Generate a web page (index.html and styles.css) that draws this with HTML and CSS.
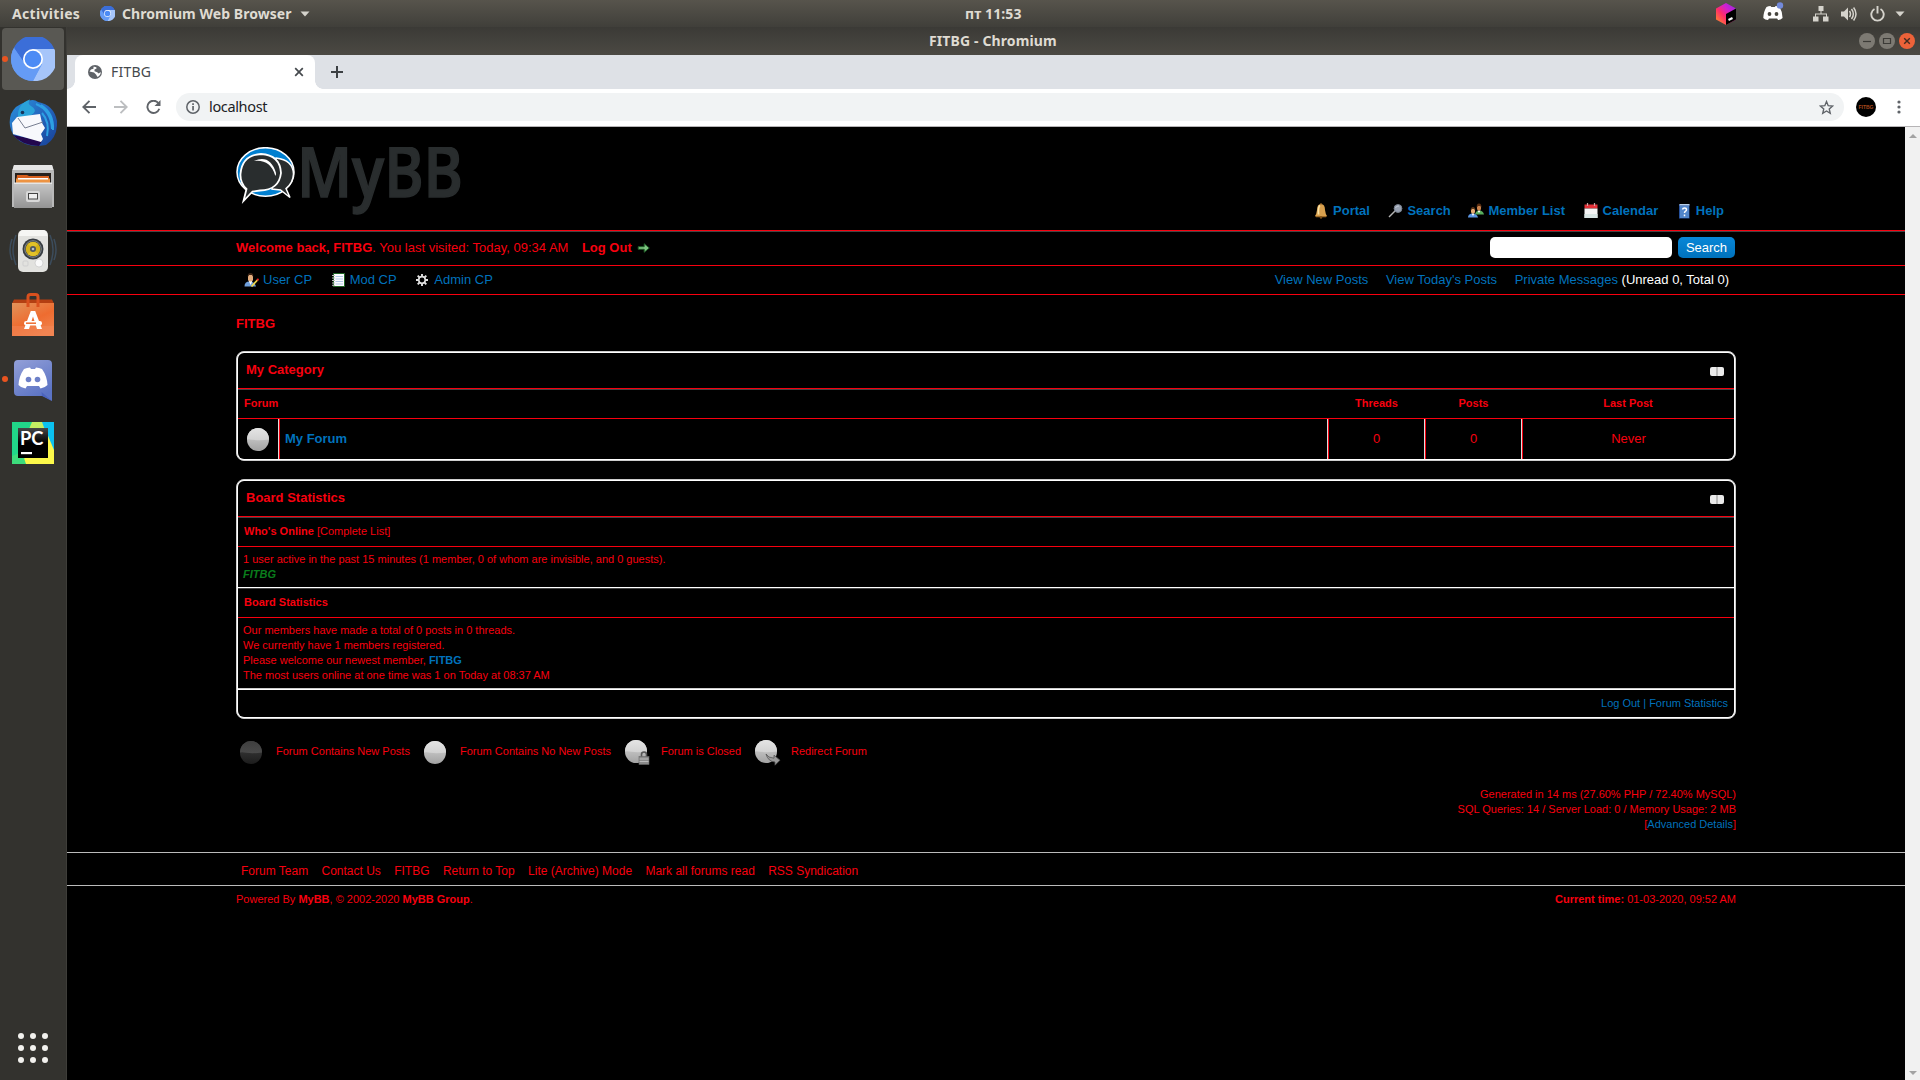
FILE: index.html
```html
<!DOCTYPE html>
<html lang="en">
<head>
<meta charset="utf-8">
<title>FITBG</title>
<link rel="stylesheet" href="styles.css">
</head>
<body>
<svg class="defs" width="0" height="0">
  <defs>
    <linearGradient id="orbTop" x1="0" y1="0" x2="0" y2="1"><stop offset="0" stop-color="#e4e4e4"/><stop offset="1" stop-color="#d2d2d2"/></linearGradient>
    <linearGradient id="orbLow" x1="0" y1="0" x2="0" y2="1"><stop offset=".4" stop-color="#c4c4c4"/><stop offset="1" stop-color="#a2a2a2"/></linearGradient>
    <linearGradient id="darkTop" x1="0" y1="0" x2="0" y2="1"><stop offset="0" stop-color="#3e3e3e"/><stop offset="1" stop-color="#4a4a4a"/></linearGradient>
    <linearGradient id="darkLow" x1="0" y1="0" x2="0" y2="1"><stop offset=".4" stop-color="#333"/><stop offset="1" stop-color="#1c1c1c"/></linearGradient>
    <symbol id="orb" viewBox="0 0 24 24"><ellipse cx="11" cy="11.5" rx="11" ry="11.5" fill="url(#orbLow)"/><path d="M0 11.5a11 11.5 0 0 1 22 0Q11 13 0 11Z" fill="url(#orbTop)"/></symbol>
    <symbol id="chromium" viewBox="0 0 44 44">
      <circle cx="22" cy="22" r="22" fill="#669df6"/>
      <path d="M3 11A22 22 0 0 1 43.300 12H22L12 24Z" fill="#3b6ed8"/>
      <path d="M22 12H43.300A22 22 0 0 1 22 44L31 27Z" fill="#a6c5fa"/>
      <path d="M3 11A22 22 0 0 0 22 44L31 27 14 27Z" fill="#659bf5"/>
      <circle cx="22" cy="22" r="10" fill="#fff"/><circle cx="22" cy="22" r="8.300" fill="#4c8bf5"/>
    </symbol>
    <symbol id="discord" viewBox="0 0 30 22"><path d="M6 2Q9 .5 12 .5L13 2h4l1-1.500q3 0 6 1.500 5 7 5.500 16-3 3-7 3.500L21 19H9l-1.500 2.500Q3 21 .5 18 1 9 6 2Z" fill="#fff"/></symbol>
  </defs>
</svg>
<div class="desktop">
  <header class="topbar">
    <span class="activities">Activities</span>
    <svg class="app-ico" width="15" height="15"><use href="#chromium"/></svg>
    <span class="app-name">Chromium Web Browser</span>
    <svg class="caret" width="10" height="6" viewBox="0 0 10 6"><path d="M.5.5h9L5 5.500Z" fill="#d5d3cc"/></svg>
    <span class="clock">пт 11:53</span>
    <div class="tray">
      <svg width="20" height="22" viewBox="0 0 20 22"><defs><linearGradient id="jb" x1="1" y1="0" x2="0" y2="1"><stop offset="0" stop-color="#8a2be2"/><stop offset=".35" stop-color="#d020d0"/><stop offset=".6" stop-color="#ff2c6a"/><stop offset="1" stop-color="#ff9a1f"/></linearGradient></defs><path d="M10 0l10 5.500v11L10 22 0 16.500v-11Z" fill="url(#jb)"/><path d="M10 11l10-5.500v11L10 22Z" fill="#000"/><path d="M12.500 17l4-2" stroke="#fff" stroke-width="2"/></svg>
      <svg class="tray-discord" width="22" height="20" viewBox="0 0 22 20"><path d="M4.500 5q2-1 4-1l.8 1h3.500l.8-1q2 0 4 1 3 5 3 11-2 2-4.500 2l-1-1.500H7L6 18q-3 0-4.700-2Q1.500 9.500 4.500 5Z" fill="#fff"/><circle cx="7.500" cy="12" r="1.900" fill="#47453f"/><circle cx="14.500" cy="12" r="1.900" fill="#47453f"/><circle cx="18" cy="3.500" r="3.200" fill="#7289da"/></svg>
      <svg class="tray-net" width="16" height="16" viewBox="0 0 16 16" fill="#d5d3cc"><path d="M5.500 0h5v5h-5zM0 10.500h5.500V15.500H0zM10 10.500h5.500V15.500H10zM7.500 5h1v3h-1zM2 7.500h12V11h-1V8.500H3V11H2z"/></svg>
      <svg class="tray-vol" width="17" height="16" viewBox="0 0 17 16"><path d="M0 5.500h3l4-4v13l-4-4H0Z" fill="#d5d3cc"/><path d="M8.500 5q2 3 0 6M10.500 3q3.700 5 0 10M12.600 1.500q4.800 6.500 0 13" fill="none" stroke="#d5d3cc" stroke-width="1.500"/></svg>
      <svg class="tray-pow" width="15" height="16" viewBox="0 0 15 16" fill="none" stroke="#d5d3cc" stroke-width="1.900"><path d="M4.500 3A6.200 6.200 0 1 0 10.500 3M7.500 0v7.500"/></svg>
      <svg class="tray-car" width="10" height="6" viewBox="0 0 10 6"><path d="M.5.5h9L5 5.500Z" fill="#d5d3cc"/></svg>
    </div>
  </header>
  <div class="workspace">
    <nav class="dock">
      <div class="tile tile-on"><i class="dot"></i><svg width="44" height="44"><use href="#chromium"/></svg></div>
      <div class="tile"><svg width="48" height="48" viewBox="0 0 48 48"><defs><linearGradient id="tb" x1="0" y1="0" x2="1" y2="1"><stop offset="0" stop-color="#2b92dd"/><stop offset=".5" stop-color="#2465bd"/><stop offset="1" stop-color="#173f95"/></linearGradient></defs><path d="M17 3Q24-1 29 3 45 6 48 22 49 38 37 46L30 47Q14 47 6 38-2 28 2 15 6 6 17 3Z" fill="url(#tb)"/><path d="M9 18Q8 5 21 .5 18 5 22 7 32 13 16 19Z" fill="#2aa3da"/><path d="M27 5q15 6 16 25M32 6q13 8 12 25M33 14q8 9 5 23" fill="none" stroke="#2da0e3" stroke-width="2"/><path d="M4 36q8 10 26 11l3-5Z" fill="#22074e"/><path d="M8 18l23-3 2 9 3 5-4 6 2 5-2 3L4 35 3 24Z" fill="#f7f8fc"/><path d="M9 19l7 10 18-6" fill="none" stroke="#777e91" stroke-width="1"/><circle cx="13.500" cy="13.500" r="1.800" fill="#16345b"/></svg></div>
      <div class="tile"><svg width="42" height="44" viewBox="0 0 42 44"><defs><linearGradient id="fc" x1="0" y1="0" x2="0" y2="1"><stop offset="0" stop-color="#c6c6c6"/><stop offset="1" stop-color="#949494"/></linearGradient></defs><path d="M2 0h38l2 6v36H0V6Z" fill="#b9b9b9"/><path d="M2 0h38l1.500 5H.5Z" fill="#e6e6e6"/><path d="M3 8h36v10H3Z" fill="#27201c"/><path d="M5 10h10l2 1h20v8H4Z" fill="#d8601e"/><path d="M4 13.500h34v5H4Z" fill="#ed9342"/><path d="M6 13h30v1.500H6Z" fill="#fff"/><path d="M2 18h38v25H2Z" fill="url(#fc)"/><path d="M2 17.500h38v1.500H2Z" fill="#e5e5e5"/><rect x="14" y="26" width="14" height="11" rx="2" fill="#d8d8d8"/><rect x="16.500" y="28.500" width="9" height="5.500" fill="#eee" stroke="#444"/></svg></div>
      <div class="tile"><svg width="48" height="44" viewBox="0 0 48 44"><g fill="none" stroke="#3c4c5c" stroke-width="1.500"><path d="M7 6q-6 14 0 30M3 10q-4 11 0 21M41 6q6 14 0 30M45 10q4 11 0 21"/></g><rect x="9" y="1" width="30" height="42" rx="5" fill="#e2e2df"/><path d="M14 1h20q5 0 4 6H10q0-6 4-6Z" fill="#f6f6f4"/><circle cx="24" cy="20" r="10.500" fill="#383d42"/><circle cx="24" cy="20" r="8.300" fill="none" stroke="#80878c"/><circle cx="24" cy="20" r="7.300" fill="#d3b11a"/><path d="M24 20l-5-5a7 7 0 0 1 10 0ZM24 20l5 5a7 7 0 0 1-10 0Z" fill="#eccd33" opacity=".6"/><circle cx="24" cy="20" r="3" fill="#4f565e"/><circle cx="24" cy="20" r="1.300" fill="#b9c0c8"/><circle cx="30" cy="34" r="4" fill="#f9f9f9" stroke="#c7c7c7" stroke-width=".7"/><rect x="14" y="32" width="5" height="5" rx="1" fill="none" stroke="#cfcfcf"/></svg></div>
      <div class="tile"><svg width="42" height="44" viewBox="0 0 42 44"><defs><linearGradient id="sw" x1="0" y1="0" x2=".6" y2="1"><stop offset="0" stop-color="#e2935a"/><stop offset=".6" stop-color="#ee6c30"/><stop offset="1" stop-color="#f0804a"/></linearGradient></defs><path d="M2 6.500h38l2 4H0Z" fill="#b33f12"/><path d="M0 10h42v33H0Z" fill="url(#sw)"/><path d="M0 33h42v10H0Z" fill="#f2875a" opacity=".5"/><path d="M16 14V4q0-2.500 2.500-2.500h5Q26 1.500 26 4v10" fill="none" stroke="#d9501e" stroke-width="3"/><path d="M18.800 18h4.400L30 36h-5l-4-12.500L17 36h-5Z" fill="#fff"/><rect x="12" y="28" width="18" height="4.500" rx="2.200" fill="#fff"/><path d="M14 30.200h10" stroke="#ee6c30" stroke-width="1.500"/></svg></div>
      <div class="tile"><i class="dot"></i><svg class="dock-discord" width="38" height="42" viewBox="0 0 38 42"><defs><linearGradient id="dc" x1="0" y1="0" x2=".5" y2="1"><stop offset="0" stop-color="#93a0d8"/><stop offset="1" stop-color="#5b73c4"/></linearGradient></defs><path d="M4 0h30q4 0 4 4v37l-9-5H4q-4 0-4-4V4q0-4 4-4Z" fill="url(#dc)"/><path d="M28 36l-.500-4L38 41Z" fill="#4a63bd"/><svg x="4" y="7" width="30" height="22"><use href="#discord"/></svg><circle cx="14.500" cy="19.500" r="2.800" fill="#6d80c8"/><circle cx="23.500" cy="19.500" r="2.800" fill="#6d80c8"/></svg></div>
      <div class="tile"><svg width="42" height="42" viewBox="0 0 42 42"><path d="M0 0h42v42H0Z" fill="#21d789"/><path d="M28 0h14v30L32 12Z" fill="#0bc1f0"/><path d="M20 0h10l3 8-16-1Z" fill="#c5ee62"/><path d="M34 9l8 19v14H9L16 30Z" fill="#fcf84a"/><path d="M0 34l10-4 4 12H0Z" fill="#3ddc7c"/><defs><linearGradient id="pc" x1="0" y1="0" x2="0" y2="1"><stop offset="0" stop-color="#474747"/><stop offset=".5" stop-color="#000"/></linearGradient></defs><path d="M6 6h30v30H6Z" fill="url(#pc)"/><text class="pc" x="8" y="22.500" textLength="23.500" lengthAdjust="spacingAndGlyphs">PC</text><path d="M9 30h11v2.200H9Z" fill="#fff"/></svg></div>
      <svg class="apps" width="30" height="30" viewBox="0 0 30 30" fill="#f2f1ee"><circle cx="3" cy="3" r="3"/><circle cx="15" cy="3" r="3"/><circle cx="27" cy="3" r="3"/><circle cx="3" cy="15" r="3"/><circle cx="15" cy="15" r="3"/><circle cx="27" cy="15" r="3"/><circle cx="3" cy="27" r="3"/><circle cx="15" cy="27" r="3"/><circle cx="27" cy="27" r="3"/></svg>
    </nav>
    <div class="window">
      <div class="titlebar">
        <span class="win-title">FITBG - Chromium</span>
        <div class="win-btns">
          <svg width="16" height="16" viewBox="0 0 16 16"><circle cx="8" cy="8" r="8" fill="#7d7a73"/><path d="M4 8.500h8" stroke="#3c3b37" stroke-width="1.200"/></svg>
          <svg width="16" height="16" viewBox="0 0 16 16"><circle cx="8" cy="8" r="8" fill="#7d7a73"/><path d="M4.500 5.500h7v5h-7z" fill="none" stroke="#3c3b37" stroke-width="1.200"/></svg>
          <svg width="16" height="16" viewBox="0 0 16 16"><circle cx="8" cy="8" r="8" fill="#ed6239"/><path d="M5.200 5.200l5.600 5.600M10.800 5.200l-5.600 5.600" stroke="#432b20" stroke-width="1.400"/></svg>
        </div>
      </div>
      <div class="tabstrip">
        <div class="tab-edge edge-l"></div>
        <div class="tab">
          <svg width="14" height="14" viewBox="0 0 14 14"><circle cx="7" cy="7" r="7" fill="#5f6368"/><path d="M5.500 1.800Q9 1.500 8.500 3.500L6.500 4.500v1.700l2.700 1 1.500 1.300 2-1.500Q13 10 9.500 12L8 9.500 6 7.500 1.500 6.500 3 4.500 5.500 3.800Z" fill="#fff"/></svg>
          <span class="tab-name">FITBG</span>
          <svg width="10" height="10" viewBox="0 0 10 10"><path d="M1.200 1.200l7.600 7.600M8.800 1.200L1.200 8.800" stroke="#45494d" stroke-width="1.700"/></svg>
        </div>
        <div class="tab-edge edge-r"></div>
        <svg class="newtab" width="12" height="12" viewBox="0 0 12 12"><path d="M6 0v12M0 6h12" stroke="#3c4043" stroke-width="2"/></svg>
      </div>
      <div class="toolbar">
        <svg width="14" height="14" viewBox="0 0 14 14" fill="none" stroke="#5f6368" stroke-width="1.900"><path d="M14 7H1.500M7.500.8L1.300 7l6.200 6.200"/></svg>
        <svg width="14" height="14" viewBox="0 0 14 14" fill="none" stroke="#bcbec0" stroke-width="1.900"><path d="M0 7h12.500M6.500.8L12.700 7l-6.200 6.200"/></svg>
        <svg width="15" height="14" viewBox="0 0 15 14"><path d="M12.300 3A6.100 6.100 0 1 0 13.300 8.800" fill="none" stroke="#5f6368" stroke-width="1.900"/><path d="M14.500 0v6h-6Z" fill="#5f6368"/></svg>
        <div class="omnibox">
          <svg width="14" height="14" viewBox="0 0 14 14"><circle cx="7" cy="7" r="6.200" fill="none" stroke="#5f6368" stroke-width="1.500"/><path d="M6.200 6h1.700v4.600H6.200zM6.200 3.300h1.700V5H6.200z" fill="#5f6368"/></svg>
          <span class="url">localhost</span>
          <svg width="15" height="15" viewBox="0 0 24 24"><path d="M12 2.500l2.700 6.600 7.100.6-5.400 4.700 1.600 7-6-3.800-6 3.800 1.600-7L2.200 9.700l7.100-.6Z" fill="none" stroke="#5f6368" stroke-width="2.200"/></svg>
        </div>
        <div class="avatar">FITBG</div>
        <svg class="kebab" width="4" height="14" viewBox="0 0 4 14" fill="#5f6368"><circle cx="2" cy="2" r="1.600"/><circle cx="2" cy="7" r="1.600"/><circle cx="2" cy="12" r="1.600"/></svg>
      </div>
      <div class="viewport">
        <main class="page">
          <div class="head"><div class="wrap head-in">
            <svg class="logo" width="236" height="80" viewBox="0 0 236 80">
              <ellipse cx="29.500" cy="25" rx="28.500" ry="24.300" fill="#007fd0" stroke="#fff" stroke-width="1.500"/>
              <path d="M40 11Q57 13 57.500 27 57 36 50 41.500L54 50.500 44.500 43 36 42Z" fill="#292d2e" stroke="#fff" stroke-width="1.500"/>
              <path d="M25 7Q44 8 45 26 43 43 24 43.500L16.500 44.500 7.500 54 10.500 42Q4 36 4.500 27 6 8 25 7Z" fill="#292d2e" stroke="#fff" stroke-width="1.800"/>
              <path d="M18 14Q34 7 40 26 40 30 39 28 34 12 18 14Z" fill="#fff"/>
              <text class="logo-word" x="61" y="49.500" textLength="166" lengthAdjust="spacingAndGlyphs">MyBB</text>
            </svg>
            <div class="menu">
              <a><svg width="16" height="16" viewBox="0 0 16 16"><path d="M8 1q4 0 4 6 .5 4 2 6H2q1.500-2 2-6 0-6 4-6Z" fill="#d9a04e"/><path d="M7 2.500q-2 1-1.500 9" stroke="#fbe3a6" stroke-width="1.700" fill="none"/><path d="M2 13h12l-1 1.200H3Z" fill="#9f6a25"/><circle cx="8" cy="14.500" r="1.200" fill="#7c4e17"/><circle cx="8" cy="1.200" r="1" fill="#b07b34"/></svg>Portal</a>
              <a><svg width="16" height="16" viewBox="0 0 16 16"><path d="M2 14L8 8" stroke="#b5b5b5" stroke-width="1.400"/><circle cx="11" cy="5.500" r="3.900" fill="#98a1b1" stroke="#79818e"/><path d="M8.500 5q1-2.500 3.500-2" stroke="#c6cdd9" fill="none"/></svg>Search</a>
              <a><svg width="16" height="16" viewBox="0 0 16 16"><path d="M7 11.500q.5-3.500 4-4 4 0 5 4Z" fill="#58ad5c"/><path d="M9.500 7.500l1.500 2.500 1.500-2.500Z" fill="#fff"/><rect x="9" y="2" width="4" height="5.500" rx="1.800" fill="#c8814a"/><path d="M8.700 4.500Q8.500.5 11 .5t2.500 4L12.300 3H10Z" fill="#5b2e12"/><path d="M0 14.500q0-3.500 4-4 5 0 6 4Z" fill="#5b95e2"/><path d="M3.500 10.500L5 13l1.500-2.500Z" fill="#fff"/><rect x="3" y="5.500" width="4" height="5" rx="1.800" fill="#e7aa70"/><path d="M2.700 7.500q0-3.500 2.300-3.500t2.300 3.500L6.300 6H3.800Z" fill="#5b3518"/></svg>Member List</a>
              <a><svg width="16" height="16" viewBox="0 0 16 16"><path d="M1.500 1.500h13v4h-13z" fill="#e33037"/><path d="M1.500 5.500h13V15h-13z" fill="#f4f4f4"/><path d="M1.500 11h13v4h-13z" fill="#d9e6e5"/><path d="M4.500 0v3M11.500 0v3" stroke="#c9a3a3" stroke-width="1.200"/></svg>Calendar</a>
              <a><svg width="16" height="16" viewBox="0 0 16 16"><path d="M3 1.500h10.500v14H3z" fill="#26519c"/><path d="M4 3h9v12H4z" fill="#5286cb"/><path d="M3.500 1h10v1.500h-10z" fill="#b8cfe8"/><path d="M6.500 6.500q.3-1.500 2-1.500 2 0 2 1.700 0 1-1.200 1.600-.8.500-.8 1.600M8.500 11.500v1.700" stroke="#fff" stroke-width="1.500" fill="none"/></svg>Help</a>
            </div>
          </div></div>
          <div class="upper"><div class="wrap row-in">
            <span><b>Welcome back, FITBG</b>. You last visited: Today, 09:34 AM</span>
            <b class="logout">Log Out</b>
            <svg width="14" height="12" viewBox="0 0 14 12"><path d="M1.200 4.700h6V1.700L12.300 6 7.200 10.300V7.300h-6Z" fill="#7cc47f" stroke="#1d5b26" stroke-width="1"/></svg>
            <div class="search"><span class="box"></span><span class="btn">Search</span></div>
          </div></div>
          <div class="lower"><div class="wrap row-in">
            <div class="cp">
              <a><svg width="16" height="16" viewBox="0 0 16 16"><path d="M1.500 14.500q0-5 5-5 5 0 6.500 5Z" fill="#6f9fdb"/><path d="M5.500 8.500h4L7.700 13Z" fill="#fff"/><rect x="5" y="2" width="5" height="7.500" rx="2.300" fill="#e3ac7d"/><path d="M4.800 5q-.5-4 2.700-4t2.700 4L9 3H6Z" fill="#3b2314"/><path d="M8.500 14.500L14.500 8" stroke="#f1d84a" stroke-width="1.800"/><circle cx="14.800" cy="7.700" r="1.100" fill="#e22"/></svg>User CP</a>
              <a><svg width="16" height="16" viewBox="0 0 16 16"><path d="M3.500 1.500h11v13h-11z" fill="#fcfdff" stroke="#1e6524"/><path d="M5.500 4.500H13M5.500 7H13M5.500 9.500H13M5.500 12H13" stroke="#b3c7e8" stroke-width="1.200"/><path d="M2 3.500h3M2 6h3M2 8.500h3M2 11h3M2 13.300h3" stroke="#bbb"/></svg>Mod CP</a>
              <a><svg width="16" height="16" viewBox="0 0 16 16"><circle cx="8" cy="8" r="3.300" fill="none" stroke="#e0e0e0" stroke-width="1.700"/><path d="M8 2v2.500M8 11.500V14M2 8h2.500M11.500 8H14M3.700 3.700l1.800 1.800M10.500 10.500l1.800 1.800M12.300 3.700l-1.800 1.800M5.500 10.500l-1.800 1.800" stroke="#e0e0e0" stroke-width="1.900"/></svg>Admin CP</a>
            </div>
            <div class="views"><a>View New Posts</a><a>View Today's Posts</a><span><a>Private Messages</a> (Unread 0, Total 0)</span></div>
          </div></div>
          <div class="wrap body">
            <div class="crumb">FITBG</div>
            <section class="card">
              <div class="card-in">
                <div class="thead"><span>My Category</span><svg width="14" height="9" viewBox="0 0 14 9"><rect width="14" height="9" rx="2" fill="#eaeaea"/><path d="M7 0v9" stroke="#8c8c8c"/></svg></div>
                <div class="tcat cols"><span>Forum</span><span>Threads</span><span>Posts</span><span>Last Post</span></div>
                <div class="trow">
                  <div class="c-orb"><svg width="24" height="24"><use href="#orb"/></svg></div>
                  <div class="c-name">My Forum</div><div class="c-num">0</div><div class="c-num">0</div><div class="c-last">Never</div>
                </div>
              </div>
            </section>
            <section class="card">
              <div class="card-in">
                <div class="thead"><span>Board Statistics</span><svg width="14" height="9" viewBox="0 0 14 9"><rect width="14" height="9" rx="2" fill="#eaeaea"/><path d="M7 0v9" stroke="#8c8c8c"/></svg></div>
                <div class="tcat"><span>Who's Online <span class="norm">[Complete List]</span></span></div>
                <div class="cell online">1 user active in the past 15 minutes (1 member, 0 of whom are invisible, and 0 guests).<br><b class="green">FITBG</b></div>
                <div class="tcat"><span>Board Statistics</span></div>
                <div class="cell">Our members have made a total of 0 posts in 0 threads.<br>We currently have 1 members registered.<br>Please welcome our newest member, <a><b>FITBG</b></a><br>The most users online at one time was 1 on Today at 08:37 AM</div>
                <div class="tfoot"><a>Log Out | Forum Statistics</a></div>
              </div>
            </section>
            <div class="legend">
              <span class="lg lg1"><svg width="24" height="24" viewBox="0 0 24 24"><ellipse cx="11" cy="11.500" rx="11" ry="11.500" fill="url(#darkLow)"/><path d="M0 11.500a11 11.500 0 0 1 22 0Q11 13 0 11Z" fill="url(#darkTop)"/></svg>Forum Contains New Posts</span>
              <span class="lg lg2"><svg width="24" height="24"><use href="#orb"/></svg>Forum Contains No New Posts</span>
              <span class="lg lg3"><svg width="26" height="26" viewBox="0 0 26 26"><svg width="24" height="24"><use href="#orb"/></svg><path d="M16.500 17v-2.500q0-2.500 2.500-2.500t2.500 2.500V17" fill="none" stroke="#555" stroke-width="1.600"/><rect x="14" y="16.500" width="10" height="8" fill="#8b8b8b" stroke="#666" stroke-width=".6"/><path d="M14.500 19h9M14.500 21.500h9" stroke="#bbb"/></svg>Forum is Closed</span>
              <span class="lg lg4"><svg width="26" height="26" viewBox="0 0 26 26"><svg width="24" height="24"><use href="#orb"/></svg><path d="M11 14q2 4 8 4.200v-3l6 5-5 5v-3.200q-7-.5-9-8Z" fill="#9a9a9a" stroke="#555" stroke-width=".8"/></svg>Redirect Forum</span>
            </div>
            <div class="debug">Generated in 14 ms (27.60% PHP / 72.40% MySQL)<br>SQL Queries: 14 / Server Load: 0 / Memory Usage: 2 MB<br>[<a>Advanced Details</a>]</div>
          </div>
          <div class="foot-up"><div class="wrap foot-links"><span>Forum Team</span><span>Contact Us</span><span>FITBG</span><span>Return to Top</span><span>Lite (Archive) Mode</span><span>Mark all forums read</span><span>RSS Syndication</span></div></div>
          <div class="wrap foot-low"><span>Powered By <b>MyBB</b>, © 2002-2020 <b>MyBB Group</b>.</span><span><b>Current time:</b> 01-03-2020, 09:52 AM</span></div>
        </main>
        <div class="scroll"><svg width="8" height="4" viewBox="0 0 8 4"><path d="M0 4l4-4 4 4Z" fill="#a3a3a3"/></svg><svg width="8" height="4" viewBox="0 0 8 4"><path d="M0 0l4 4 4-4Z" fill="#a3a3a3"/></svg></div>
      </div>
    </div>
  </div>
</div>
</body>
</html>
```
FILE: styles.css
```css
* { box-sizing: border-box; }
body { margin: 0; background: #000; overflow: hidden; }
svg { display: block; flex: none; }
.defs { position: absolute; }
.desktop { width: 1920px; height: 1080px; display: flex; flex-direction: column; }

.topbar { height: 27px; flex: none; display: flex; align-items: center; padding-left: 12px; background: linear-gradient(#57544c, #403f3a); color: #dfdbd2; font: bold 14px/27px "Noto Sans", sans-serif; white-space: nowrap; }
.activities { width: 88px; letter-spacing: .32px; }
.app-ico { margin-right: 7px; }
.app-name { width: 177px; letter-spacing: .05px; }
.caret { margin-left: 1px; }
.clock { margin-left: 655px; width: 60px; letter-spacing: .1px; }
.tray { display: flex; align-items: center; margin-left: auto; padding-right: 15px; }
.tray-discord { margin-left: 26px; margin-top: -3px; }
.tray-net { margin-left: 29px; }
.tray-vol { margin-left: 12px; }
.tray-pow { margin-left: 12px; }
.tray-car { margin-left: 10px; }

.workspace { flex: 1; display: flex; min-height: 0; }
.dock { width: 67px; flex: none; background: #33322e; border-right: 1px solid #3e3d39; display: flex; flex-direction: column; gap: 2px; padding: 1px 0 17px 2px; }
.tile { position: relative; width: 62px; height: 62px; border-radius: 4px; display: flex; align-items: center; justify-content: center; }
.tile-on { background: #595853; }
.dot { position: absolute; left: 0; top: 28px; width: 6px; height: 6px; border-radius: 50%; background: #e95420; }
.dock-discord { margin-top: 3px; }
.pc { font: bold 19px "Lato", sans-serif; fill: #fff; }
.apps { margin: auto 0 0 16px; }

.window { flex: 1; display: flex; flex-direction: column; min-width: 0; }
.titlebar { height: 28px; flex: none; display: flex; align-items: center; background: linear-gradient(#3b3a36, #4b4943); color: #dfdbd2; font: bold 14px/28px "Noto Sans", sans-serif; }
.win-title { margin-left: 862px; letter-spacing: .12px; }
.win-btns { margin-left: auto; display: flex; gap: 4px; padding-right: 5px; }
.tabstrip { height: 34px; flex: none; background: #dee1e6; display: flex; align-items: center; }
.tab { width: 240px; height: 34px; border-radius: 8px 8px 0 0; background: #fff; display: flex; align-items: center; padding: 0 11px 0 13px; font: 14px/34px "Noto Sans", sans-serif; color: #45494d; }
.tab-name { margin: 0 auto 0 9px; letter-spacing: .2px; }
.tab-edge { width: 8px; height: 8px; align-self: flex-end; background: #fff; }
.edge-l { background: radial-gradient(circle at 0 0, #dee1e6 7.5px, #fff 8px); }
.edge-r { background: radial-gradient(circle at 100% 0, #dee1e6 7.5px, #fff 8px); }
.newtab { margin-left: 8px; }
.toolbar { height: 38px; flex: none; background: #fff; border-bottom: 1px solid #b6b4b6; display: flex; align-items: center; gap: 18px; padding: 0 19px 1px 15px; }
.omnibox { flex: 1; height: 28px; margin-left: -3px; border-radius: 14px; background: #f1f3f4; display: flex; align-items: center; padding: 0 10px; font: 14.5px/26px "Noto Sans", sans-serif; color: #202124; }
.url { height: 28px; margin: 0 auto 0 9px; letter-spacing: -.35px; }
.avatar { width: 20px; height: 20px; margin-left: -6px; border-radius: 50%; background: #000; color: #a8481c; font: bold 5px/20px "Liberation Sans", sans-serif; text-align: center; }
.kebab { margin-left: 3px; }

.viewport { flex: 1; display: flex; min-height: 0; }
.scroll { width: 15px; flex: none; background: #f1f1f1; display: flex; flex-direction: column; align-items: center; justify-content: space-between; padding: 7px 0 5px; }
.page { flex: 1; background: #000; color: #f8000f; font: 13px/18px "Liberation Sans", Arial, sans-serif; }
.page a { color: #0072bc; }
.wrap { width: 1500px; margin: 0 auto; }

.head { height: 104px; border-bottom: 1px solid #f8000f; }
.head-in { display: flex; justify-content: space-between; padding-top: 20px; }
.logo-word { font: 600 70px "Open Sans", sans-serif; fill: #292d2e; stroke: #292d2e; stroke-width: 1.5px; }
.menu { display: flex; gap: 17.6px; padding: 55px 12px 0 0; font-weight: bold; }
.menu a, .cp a { display: flex; align-items: center; gap: 4px; height: 18px; }
.row-in { display: flex; align-items: center; }
.upper { height: 35px; border-top: 1px solid #444; border-bottom: 1px solid #f8000f; }
.upper .row-in { height: 31px; }
.logout { margin: 0 5px 0 13.5px; }
.search { margin-left: auto; display: flex; gap: 6px; padding-right: 1px; }
.box { width: 182px; height: 21px; border-radius: 5px; background: #fff; }
.btn { width: 57px; height: 21px; border-radius: 5px; background: linear-gradient(#0887d8, #0072bc); color: #fff; text-align: center; line-height: 21px; }
.lower { height: 29px; border-bottom: 1px solid #f8000f; }
.lower .row-in { height: 28px; justify-content: space-between; padding: 0 7px; }
.cp, .views { display: flex; gap: 17.6px; }
.views { color: #fff; }

.body { padding-top: 20px; height: 557px; }
.crumb { font-weight: bold; height: 36px; line-height: 18px; }
.card { border: 1px solid #ccc; border-radius: 8px; background: #fff; padding: 1px; margin-bottom: 18px; }
.card-in { border-radius: 6px; background: #000; overflow: hidden; }
.thead { height: 36px; border-bottom: 1px solid #f8000f; display: flex; align-items: center; justify-content: space-between; padding: 0 10px 2px 8px; font-weight: bold; }
.thead svg { margin-top: 4px; }
.tcat { height: 30px; border-top: 1px solid #444; border-bottom: 1px solid #f8000f; font-weight: bold; font-size: 11px; line-height: 26px; padding-left: 6px; }
.norm { font-weight: normal; }
.cols { display: grid; grid-template-columns: 1fr 97px 97px 212px; text-align: center; }
.cols span:first-child { text-align: left; }
.trow { display: grid; grid-template-columns: 41px 1fr 97px 97px 212px; height: 40px; line-height: 40px; text-align: center; }
.trow > div + div { border-left: 1px solid #f8000f; }
.trow > div:not(:last-child) { border-right: 1px solid #ddd; }
.c-orb { padding: 9px 0 0 9px; }
.trow .c-name { text-align: left; font-weight: bold; color: #0072bc; padding-left: 5px; }
.cell { font-size: 11px; line-height: 15px; padding: 5px; height: 70px; }
.online { height: 41px; border-bottom: 1px solid #fff; }
.green { color: #0a7d1c; font-style: italic; }
.tfoot { height: 29px; border-top: 1px solid #ccc; box-shadow: inset 0 1px #fff; font-size: 11px; line-height: 29px; text-align: right; padding-right: 6px; }

.legend { display: flex; height: 30px; margin-top: 20px; padding-left: 4px; font-size: 11px; line-height: 24px; }
.lg { display: flex; gap: 12px; }
.lg1 { width: 184px; }
.lg2 { width: 201px; }
.lg3 { width: 130px; }
.lg1 svg, .lg2 svg { margin-top: 2px; }
.lg3 svg, .lg4 svg { margin-top: 1px; }
.lg3, .lg4 { gap: 10px; }
.debug { font-size: 11px; line-height: 15px; text-align: right; margin-top: 18px; }
.foot-up { border-top: 1px solid #bbb; border-bottom: 1px solid #bbb; height: 34px; }
.foot-links { display: flex; gap: 13.35px; font-size: 12px; line-height: 37px; padding-left: 5px; }
.foot-low { display: flex; justify-content: space-between; font-size: 11px; line-height: 26px; }
```
